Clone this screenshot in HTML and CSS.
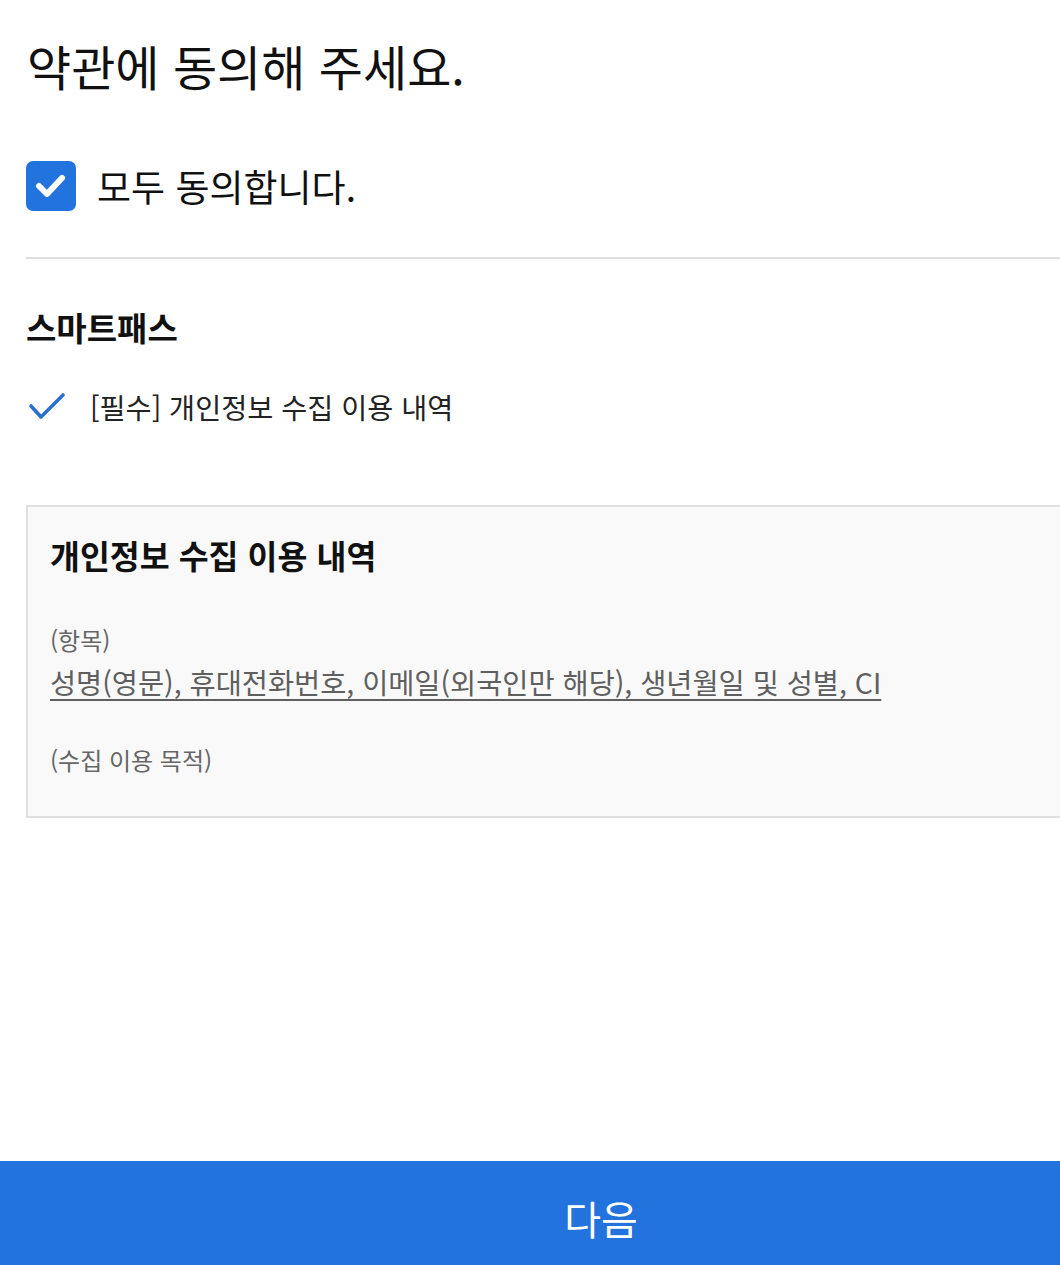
FILE: index.html
```html
<!DOCTYPE html>
<html lang="ko">
<head>
<meta charset="utf-8">
<link rel="stylesheet" href="styles.css">
</head>
<body>
<div class="page">
  <main class="content">
    <h1 class="title">약관에 동의해 주세요.</h1>
    <label class="all-row">
      <span class="checkbox">
        <svg viewBox="0 0 50 50" width="50" height="50"><polyline points="13,25 21,33 36,17" fill="none" stroke="#fff" stroke-width="6" stroke-linecap="round" stroke-linejoin="round"/></svg>
      </span>
      <span class="all-text">모두 동의합니다.</span>
    </label>
    <hr class="divider">
    <h2 class="section">스마트패스</h2>
    <div class="item">
      <svg class="tick" viewBox="0 0 40 30" width="40" height="30"><polyline points="5,14 15,25 37,3" fill="none" stroke="#2b6fd3" stroke-width="3.6" stroke-linecap="round" stroke-linejoin="round"/></svg>
      <span class="item-text">[필수] 개인정보 수집 이용 내역</span>
    </div>
    <section class="box">
      <h3 class="box-title">개인정보 수집 이용 내역</h3>
      <p class="label first">(항목)</p>
      <p class="link">성명(영문), 휴대전화번호, 이메일(외국인만 해당), 생년월일 및 성별, CI</p>
      <p class="label second">(수집 이용 목적)</p>
    </section>
  </main>
  <button class="next">다음</button>
</div>
</body>
</html>
```
FILE: styles.css
```css
html, body {
  margin: 0;
  padding: 0;
  overflow: hidden;
  background: #fff;
}
body {
  font-family: "Noto Sans CJK KR", "Noto Sans", sans-serif;
  color: #111;
}
.page {
  width: 1202px;
  min-height: 1265px;
  display: flex;
  flex-direction: column;
}
.content {
  flex: 1;
  padding: 35px 26px 0 26px;
}
.title {
  margin: 0;
  font-size: 48px;
  font-weight: 400;
  line-height: 60px;
  height: 60px;
  padding-left: 1px;
  color: #111;
}
.all-row {
  display: flex;
  align-items: center;
  margin-top: 66px;
  height: 50px;
}
.checkbox {
  width: 50px;
  height: 50px;
  border-radius: 7px;
  background: #2373de;
  display: flex;
}
.all-text {
  margin-left: 21px;
  font-size: 37px;
  line-height: 50px;
  color: #111;
}
.divider {
  margin: 46px 0 0 0;
  border: none;
  border-top: 2px solid #dedede;
  height: 0;
}
.section {
  margin: 48px 0 0 0;
  font-size: 33px;
  font-weight: 700;
  line-height: 40px;
  color: #111;
}
.item {
  display: flex;
  align-items: center;
  margin-top: 40px;
  height: 40px;
}
.item-text {
  margin-left: 24px;
  font-size: 28.3px;
  line-height: 40px;
  color: #222;
}
.box {
  margin-top: 78px;
  border: 2px solid #e0e0e0;
  background: #f9f9f9;
  padding: 28px 22px 39px 22px;
}
.box-title {
  margin: 0;
  font-size: 32.5px;
  font-weight: 700;
  line-height: 40px;
  color: #111;
}
.label {
  margin: 0;
  font-size: 24px;
  line-height: 34px;
  color: #666;
}
.label.first {
  margin-top: 48px;
}
.link {
  margin: 5px 0 0 0;
  font-size: 28.4px;
  line-height: 40px;
  color: #5f5f5f;
  text-decoration: underline;
  text-decoration-thickness: 2px;
  text-underline-offset: 5px;
}
.label.second {
  margin-top: 41px;
}
.next {
  height: 104px;
  border: none;
  margin: 0;
  padding: 10px 0 0 0;
  background: #2373de;
  color: #fff;
  font-family: "Noto Sans CJK KR", "Noto Sans", sans-serif;
  font-size: 40px;
  font-weight: 400;
  width: 100%;
}
```
